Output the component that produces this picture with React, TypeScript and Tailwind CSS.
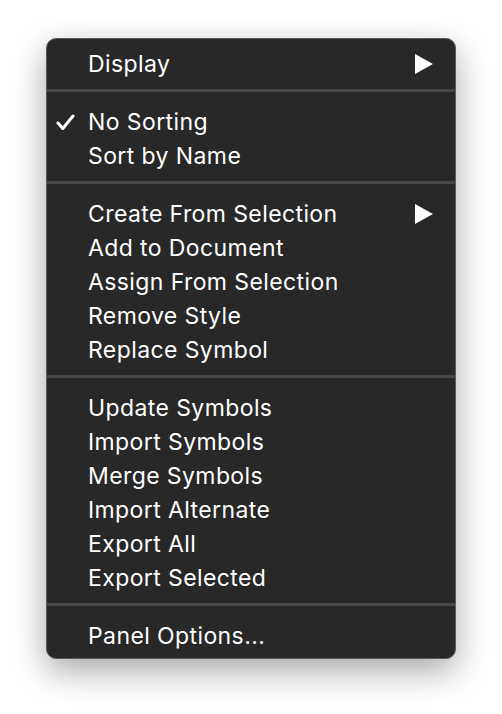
const groups: { label: string; checked?: boolean; submenu?: boolean }[][] = [
  [{ label: 'Display', submenu: true }],
  [{ label: 'No Sorting', checked: true }, { label: 'Sort by Name' }],
  [
    { label: 'Create From Selection', submenu: true },
    { label: 'Add to Document' },
    { label: 'Assign From Selection' },
    { label: 'Remove Style' },
    { label: 'Replace Symbol' },
  ],
  [
    { label: 'Update Symbols' },
    { label: 'Import Symbols' },
    { label: 'Merge Symbols' },
    { label: 'Import Alternate' },
    { label: 'Export All' },
    { label: 'Export Selected' },
  ],
  [{ label: 'Panel Options...' }],
];

const Check = () => (
  <svg width="19" height="17" viewBox="0 0 19 17" className="absolute left-[9px]">
    <path d="M2 9 L6.8 14.5 L17 2" fill="none" stroke="#fff" strokeWidth="3" strokeLinecap="round" strokeLinejoin="round" />
  </svg>
);

const Arrow = () => (
  <svg width="18" height="20" viewBox="0 0 18 20" className="absolute left-[368px]">
    <path d="M0 0 L18 10 L0 20 Z" fill="#fff" />
  </svg>
);

export default function App() {
  return (
    <div className="min-h-screen bg-white pt-[38px] pl-[46px]" style={{ fontFamily: 'Inter, "Noto Sans", sans-serif' }}>
      <div className="w-[410px] rounded-[10px] bg-[#282828] border border-[#5a5a5a] pt-[7px] pb-[6px] shadow-[0_12px_34px_rgba(0,0,0,0.35)]">
        {groups.map((group, gi) => (
          <div key={gi}>
            {gi > 0 && <div className="mt-[9px] mb-[12px] h-[3px] bg-[#474747]" />}
            {group.map((item) => (
              <div key={item.label} className="relative flex h-[34px] items-center pt-[2px] pl-[41px] text-[23px] text-white tracking-[0.4px]">
                {item.checked && <Check />}
                <span>{item.label}</span>
                {item.submenu && <Arrow />}
              </div>
            ))}
          </div>
        ))}
      </div>
    </div>
  );
}
